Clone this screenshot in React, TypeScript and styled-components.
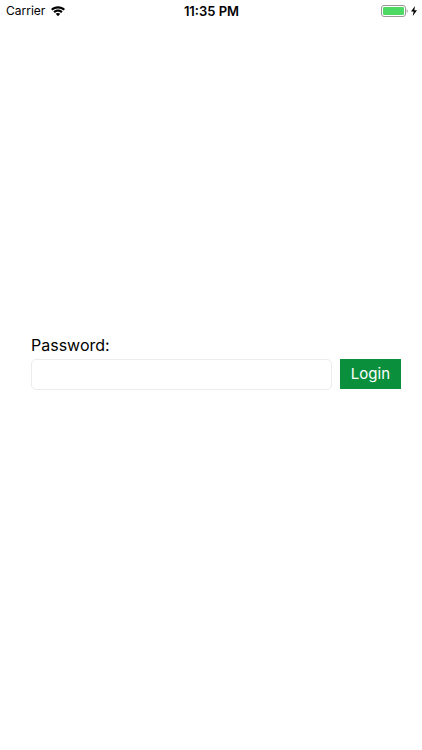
import React from "react";
import styled, { createGlobalStyle } from "styled-components";

const GlobalStyle = createGlobalStyle`
  *, *::before, *::after { box-sizing: border-box; }
  body { margin: 0; background: #fff; color: #000; font-family: Inter, "Liberation Sans", sans-serif; }
`;

const Screen = styled.div`
  min-height: 100vh;
  display: flex;
  flex-direction: column;
`;

const StatusBar = styled.header`
  display: grid;
  grid-template-columns: 1fr auto 1fr;
  align-items: center;
  height: 22px;
  padding: 0 5px 0 6px;
  font-size: 12px;
  line-height: 22px;
`;

const StatusGroup = styled.div<{ $end?: boolean }>`
  display: flex;
  align-items: center;
  gap: ${(p) => (p.$end ? 3 : 6)}px;
  justify-content: ${(p) => (p.$end ? "flex-end" : "flex-start")};
`;

const Clock = styled.time`
  font-size: 13px;
  font-weight: 600;
`;

const Main = styled.main`
  flex: 1;
  display: flex;
  flex-direction: column;
  justify-content: center;
  padding: 0 21px 48px 31px;
`;

const Form = styled.form`
  display: flex;
  flex-direction: column;
  gap: 4px;
`;

const Label = styled.label`
  font-size: 16px;
  line-height: 20px;
`;

const Row = styled.div`
  display: flex;
  align-items: flex-start;
  gap: 8px;
`;

const PasswordInput = styled.input`
  flex: 1;
  min-width: 0;
  height: 31px;
  padding: 0 7px;
  border: 1px solid #ececec;
  border-radius: 5px;
  background: #fff;
  font: inherit;
  font-size: 16px;
`;

const LoginButton = styled.button`
  height: 30px;
  padding: 0 11px;
  border: 0;
  background: #0a8f3c;
  color: #fff;
  font: inherit;
  font-size: 15px;
`;

export default function App() {
  return (
    <Screen>
      <GlobalStyle />
      <StatusBar>
        <StatusGroup>
          <span>Carrier</span>
          <svg width="14" height="11" viewBox="0 0 14 11" aria-hidden="true">
            <path d="M7 0.2 C4.3 0.2 1.9 1.2 0 2.9 L1.5 4.5 C3 3.2 4.9 2.4 7 2.4 S11 3.2 12.5 4.5 L14 2.9 C12.1 1.2 9.7 0.2 7 0.2Z M7 3.6 C5.3 3.6 3.7 4.2 2.4 5.4 L3.9 6.9 C4.7 6.2 5.8 5.7 7 5.7 S9.3 6.2 10.1 6.9 L11.6 5.4 C10.3 4.2 8.7 3.6 7 3.6Z M7 6.9 C6.1 6.9 5.3 7.2 4.7 7.8 L7 10.2 L9.3 7.8 C8.7 7.2 7.9 6.9 7 6.9Z" />
          </svg>
        </StatusGroup>
        <Clock>11:35 PM</Clock>
        <StatusGroup $end>
          <svg width="27" height="12" viewBox="0 0 27 12" aria-hidden="true">
            <rect x="0.5" y="0.5" width="24" height="11" rx="2.5" fill="none" stroke="#999" />
            <rect x="2" y="2" width="21" height="8" rx="1.3" fill="#4cd964" />
            <path d="M25.7 4 C27 4.5 27 7.5 25.7 8Z" fill="#999" />
          </svg>
          <svg width="6" height="10" viewBox="0 0 6 10" aria-hidden="true">
            <path d="M4 0 L0 5.6 H2.6 L1.8 10 L6 4.2 H3.3Z" />
          </svg>
        </StatusGroup>
      </StatusBar>
      <Main>
        <Form onSubmit={(e) => e.preventDefault()}>
          <Label htmlFor="password">Password:</Label>
          <Row>
            <PasswordInput id="password" type="password" />
            <LoginButton type="submit">Login</LoginButton>
          </Row>
        </Form>
      </Main>
    </Screen>
  );
}
